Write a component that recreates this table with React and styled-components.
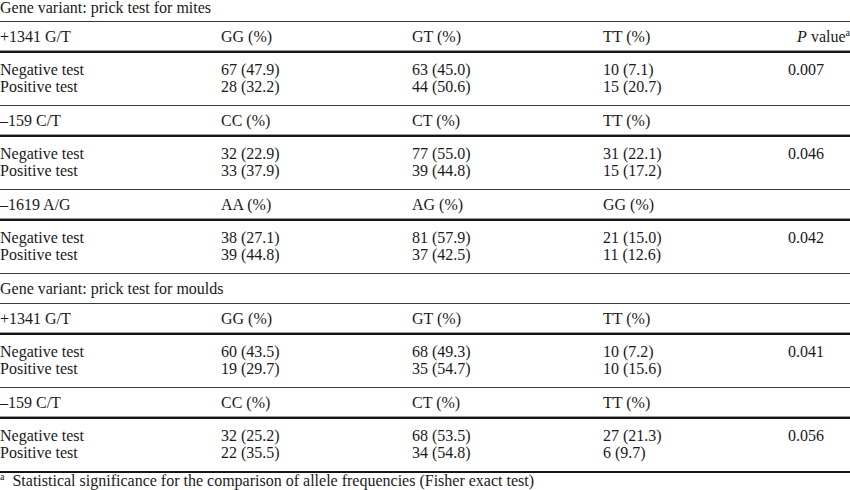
import React from 'react';
import styled, { createGlobalStyle } from 'styled-components';

const Global = createGlobalStyle`
  html, body {
    margin: 0;
    padding: 0;
    background: #fff;
  }
  body {
    font-family: "Liberation Serif", "Times New Roman", serif;
    color: #1a1a1a;
  }
`;

const Wrapper = styled.section`
  width: 850px;
  height: 490px;
  overflow: hidden;
  font-size: 16px;
`;

const Title = styled.div`
  height: ${p => (p.$first ? '21px' : '29px')};
  line-height: ${p => (p.$first ? '15px' : '29px')};
  border-bottom: 1px solid #3a3a3a;
  white-space: nowrap;
`;

const Grid = styled.div`
  display: grid;
  grid-template-columns: 221px 191px 191px 185px 62px;
  align-items: center;
  white-space: nowrap;
`;

const HeadRow = styled(Grid)`
  height: 29px;
  line-height: 17px;
  border-bottom: 2px solid #151515;
  box-shadow: 0 -1px 0 #9a9a9a inset;
`;

const DataRow = styled(Grid)`
  height: 50px;
  padding-bottom: 2px;
  line-height: 17px;
  border-bottom: ${p => (p.$last ? '2px solid #151515' : '1px solid #3a3a3a')};
`;

const Cell = styled.div`
  text-align: ${p => (p.$right ? 'right' : 'left')};
`;

const Line = styled.div`
  height: 17px;
`;

const Sup = styled.sup`
  font-size: 10px;
  line-height: 0;
  vertical-align: 6px;
`;

const Note = styled.p`
  margin: 0;
  line-height: 15px;
  white-space: nowrap;
`;

const sections = [
  {
    title: 'Gene variant: prick test for mites',
    groups: [
      {
        snp: '+1341 G/T',
        heads: ['GG (%)', 'GT (%)', 'TT (%)'],
        neg: ['67 (47.9)', '63 (45.0)', '10 (7.1)'],
        pos: ['28 (32.2)', '44 (50.6)', '15 (20.7)'],
        p: '0.007',
        pHead: true,
      },
      {
        snp: '\u2013159 C/T',
        heads: ['CC (%)', 'CT (%)', 'TT (%)'],
        neg: ['32 (22.9)', '77 (55.0)', '31 (22.1)'],
        pos: ['33 (37.9)', '39 (44.8)', '15 (17.2)'],
        p: '0.046',
      },
      {
        snp: '\u20131619 A/G',
        heads: ['AA (%)', 'AG (%)', 'GG (%)'],
        neg: ['38 (27.1)', '81 (57.9)', '21 (15.0)'],
        pos: ['39 (44.8)', '37 (42.5)', '11 (12.6)'],
        p: '0.042',
      },
    ],
  },
  {
    title: 'Gene variant: prick test for moulds',
    groups: [
      {
        snp: '+1341 G/T',
        heads: ['GG (%)', 'GT (%)', 'TT (%)'],
        neg: ['60 (43.5)', '68 (49.3)', '10 (7.2)'],
        pos: ['19 (29.7)', '35 (54.7)', '10 (15.6)'],
        p: '0.041',
      },
      {
        snp: '\u2013159 C/T',
        heads: ['CC (%)', 'CT (%)', 'TT (%)'],
        neg: ['32 (25.2)', '68 (53.5)', '27 (21.3)'],
        pos: ['22 (35.5)', '34 (54.8)', '6 (9.7)'],
        p: '0.056',
        last: true,
      },
    ],
  },
];

function App() {
  return (
    <Wrapper>
      <Global />
      {sections.map((s, si) => (
        <React.Fragment key={s.title}>
          <Title $first={si === 0}>{s.title}</Title>
          {s.groups.map(g => (
            <React.Fragment key={s.title + g.snp}>
              <HeadRow>
                <Cell>{g.snp}</Cell>
                {g.heads.map(h => (
                  <Cell key={h}>{h}</Cell>
                ))}
                <Cell $right>
                  {g.pHead && (
                    <>
                      <i>P</i> value<Sup>a</Sup>
                    </>
                  )}
                </Cell>
              </HeadRow>
              <DataRow $last={g.last}>
                <Cell>
                  <Line>Negative test</Line>
                  <Line>Positive test</Line>
                </Cell>
                {g.neg.map((n, i) => (
                  <Cell key={i}>
                    <Line>{n}</Line>
                    <Line>{g.pos[i]}</Line>
                  </Cell>
                ))}
                <Cell>
                  <Line>{g.p}</Line>
                  <Line />
                </Cell>
              </DataRow>
            </React.Fragment>
          ))}
        </React.Fragment>
      ))}
      <Note>
        <Sup>a</Sup>&nbsp; Statistical significance for the comparison of allele frequencies (Fisher exact test)
      </Note>
    </Wrapper>
  );
}

export default App;
